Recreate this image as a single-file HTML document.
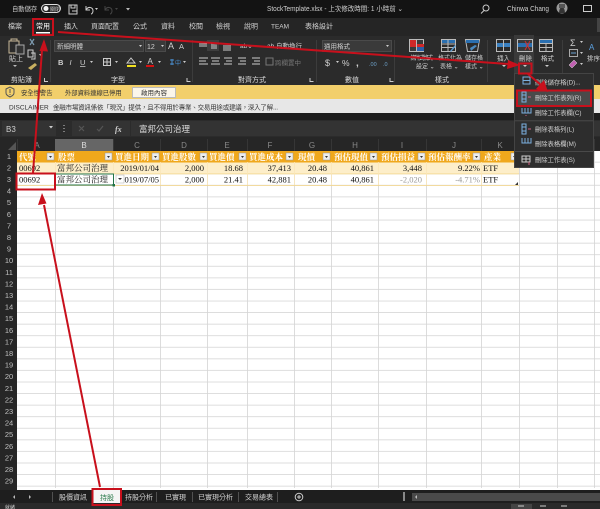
<!DOCTYPE html>
<html><head><meta charset="utf-8"><style>
html,body{margin:0;padding:0;background:#1a1a1a;width:600px;height:509px;overflow:hidden}
svg{display:block}
text{font-family:"Liberation Sans","Noto Sans CJK TC",sans-serif;font-size:7px;fill:#d0d0d0}
.s{font-family:"Liberation Serif","Noto Serif CJK SC",serif;font-size:8.5px;fill:#111}
.h{font-family:"Liberation Serif","Noto Serif CJK SC",serif;font-size:8.5px;fill:#fff;font-weight:bold}
.r{text-anchor:end}.m{text-anchor:middle}
.g{fill:#888;font-size:8px;text-anchor:middle}
.rn{fill:#c0c0c0;font-size:7.5px;text-anchor:middle}
.i{fill:none;stroke:#ccc;stroke-width:1}
.red{stroke:#c8101c;stroke-width:2;fill:none}
.hd{fill:#c8101c}
.sm{font-size:6px}
</style></head><body>
<svg width="600" height="509" viewBox="0 0 600 509" xmlns="http://www.w3.org/2000/svg">
<defs>
<pattern id="rows" x="0" y="151" width="600" height="11.57" patternUnits="userSpaceOnUse"><rect y="10.800" width="600" height="0.8" fill="#d4d4d4"/></pattern>
</defs>
<!-- title bar -->
<rect width="600" height="18" fill="#131313"/>
<text x="12" y="11" class="sm" style="font-size:6.300px">自動儲存</text>
<rect x="41.500" y="4.500" width="19" height="8" rx="4" fill="#222" stroke="#ddd"/><circle cx="46" cy="8.500" r="2.500" fill="#eee"/><text x="50" y="11" style="font-size:5px">關閉</text>
<path class="i" d="M69 5h8v9h-8zM71 5v3h4V5M72 11h5"/>
<path class="i" d="M86 6v4h4M86 10c2-4 7-3 7 1 0 1.500-1 3-2 3"/><path d="M95 8h3l-1.500 2z" fill="#ccc"/>
<path d="M105 6v4h4M105 10c2-4 7-3 7 1 0 1.500-1 3-2 3" fill="none" stroke="#444"/><path d="M115 8h3l-1.500 2z" fill="#444"/>
<path d="M126 8h4l-2 2.500z" fill="#bbb"/>
<text x="267" y="11" textLength="136" lengthAdjust="spacingAndGlyphs" style="font-size:7px">StockTemplate.xlsx  -  上次修改時間: 1 小時前  ⌄</text>
<circle cx="486" cy="8" r="3" class="i"/><path class="i" d="M484 10.500l-3 3"/>
<text x="507" y="11" textLength="42" lengthAdjust="spacingAndGlyphs" style="font-size:7px">Chinwa Chang</text>
<circle cx="562" cy="8" r="5.500" fill="#999"/><path d="M559 13a3 6 0 0 1 6 0z" fill="#333"/><rect x="559" y="4" width="6" height="4" fill="#555"/>
<rect x="583.500" y="5.500" width="8" height="6" class="i"/>
<!-- tabs -->
<rect y="18" width="600" height="18" fill="#252525"/>
<g><text x="8" y="28.500">檔案</text><text x="36" y="28.500" style="fill:#fff">常用</text><text x="64" y="28.500">插入</text><text x="91" y="28.500">頁面配置</text><text x="133" y="28.500">公式</text><text x="161" y="28.500">資料</text><text x="189" y="28.500">校閱</text><text x="216" y="28.500">檢視</text><text x="244" y="28.500">說明</text><text x="271" y="28.500" style="font-size:6.500px">TEAM</text><text x="305" y="28.500">表格設計</text></g>
<rect x="36" y="32" width="14" height="1.500" fill="#fff"/>
<!-- ribbon -->
<rect y="36" width="600" height="49" fill="#2b2b2b"/>
<rect x="597" y="18" width="3" height="14" fill="#444"/>
<g fill="#444"><rect x="50" y="40" width=".7" height="42"/><rect x="192" y="40" width=".7" height="42"/><rect x="316" y="40" width=".7" height="42"/><rect x="394" y="40" width=".7" height="42"/><rect x="487" y="40" width=".7" height="42"/><rect x="562" y="40" width=".7" height="42"/></g>
<!-- clipboard -->
<path d="M11 39h6v2h-6zM9 41h10v4h-3v8h-7z" fill="none" stroke="#c8b898"/><rect x="16" y="45" width="8" height="9" fill="#333" stroke="#aaa"/>
<text x="9" y="61" style="font-size:7px">貼上</text><path d="M13 65h4l-2 2z" fill="#bbb"/>
<path d="M30 39l4 6m0-6l-4 6" stroke="#7d9bb0" stroke-width="1.200"/>
<path class="i" d="M28 50h5v7h-5zM31 53h4v6h-4"/><path d="M39 54h3l-1.500 2z" fill="#ccc"/>
<path d="M28 68l7-5 2 2-6 5z" fill="#c8b060"/>
<text x="11" y="82" style="fill:#ddd">剪貼簿</text>
<path class="i" d="M44.500 78v3.500h3.500"/>
<!-- font -->
<rect x="54.500" y="40.500" width="89" height="11" fill="#3a3a3a" stroke="#4a4a4a"/><text x="57" y="48.500" style="font-size:6.500px">新細明體</text><path d="M139 45h3l-1.500 2z" fill="#ccc"/>
<rect x="145.500" y="40.500" width="20" height="11" fill="#3a3a3a" stroke="#4a4a4a"/><text x="147" y="49" style="font-size:7px">12</text><path d="M161 45h3l-1.500 2z" fill="#ccc"/>
<text x="168" y="49" style="font-size:9px">A</text><text x="179" y="49" style="font-size:7.500px">A</text>
<text x="58" y="65" style="font-size:7.500px;font-weight:bold">B</text><text x="69.500" y="65" style="font-size:7.500px;font-style:italic">I</text><text x="80" y="65" style="font-size:7.500px;text-decoration:underline">U</text><path d="M90 61h3l-1.500 2z" fill="#ccc"/>
<rect x="103.500" y="58.500" width="7" height="7" class="i"/><path class="i" d="M107 58.500v7M103.500 62h7"/><path d="M115 61h3l-1.500 2z" fill="#ccc"/>
<path d="M127 63l4-5 4 5z" fill="none" stroke="#ccc"/><rect x="127" y="65" width="9" height="2" fill="#f0e020"/><path d="M139 61h3l-1.500 2z" fill="#ccc"/>
<text x="147.500" y="64" style="font-size:8px">A</text><rect x="146" y="65" width="8" height="2" fill="#d81010"/><path d="M158 61h3l-1.500 2z" fill="#ccc"/>
<path d="M172 59v6M170 60h4M170 64h4" stroke="#4a8fd0"/><text x="175" y="65" style="font-size:6px;fill:#4a8fd0">中</text><path d="M183 61h3l-1.500 2z" fill="#ccc"/>
<text x="111" y="82" style="fill:#ddd">字型</text>
<path class="i" d="M187 78v3.500h3.500"/>
<!-- alignment -->
<rect x="207" y="40" width="12" height="11" fill="#3e3e3e"/>
<path class="i" d="M199 42h8M199 44h8M199 46h8M211 44h6M211 46h6M211 48h6M223 46h8M223 48h8M223 50h8"/>
<path class="i" d="M199 58h9M199 61h7M199 64h9M211 58h9M212 61h7M211 64h9M224 58h8M226 61h6M224 64h8M238 58h8M240 61h6M238 64h8M252 58h8M254 61h6M252 64h8"/>
<text x="240" y="48" style="font-size:6.500px">ab⌄</text>
<text x="267" y="48" style="font-size:6.500px">ab 自動換行</text>
<rect x="266" y="58" width="7" height="7" class="i" style="stroke:#777"/>
<text x="275" y="65" style="font-size:6.500px;fill:#777">跨欄置中</text>
<text x="238" y="82" style="fill:#ddd">對齊方式</text>
<path class="i" d="M310 78v3.500h3.500"/>
<!-- number -->
<rect x="322.500" y="40.500" width="69" height="11" fill="#3a3a3a" stroke="#4a4a4a"/><text x="324" y="48.500" style="font-size:6.500px">通用格式</text><path d="M386 45h3l-1.500 2z" fill="#ccc"/>
<text x="325" y="66" style="font-size:9px">$</text><path d="M336 61h3l-1.500 2z" fill="#ccc"/><text x="342" y="66" style="font-size:8.500px">%</text><text x="356" y="66" style="font-size:10px;font-weight:bold">,</text>
<text x="369" y="66" style="font-size:5.500px;fill:#6da0c8">.00</text><text x="383" y="66" style="font-size:5.500px;fill:#6da0c8">.0</text>
<text x="345" y="82" style="fill:#ddd">數值</text>
<path class="i" d="M390 78v3.500h3.500"/>
<!-- styles -->
<rect x="409.500" y="39.500" width="14" height="12" fill="#3a3a3a" stroke="#bbb"/><rect x="410" y="40" width="7" height="4" fill="#d02828"/><rect x="410" y="44" width="14" height="3" fill="#d02828"/><rect x="417" y="47" width="7" height="4" fill="#2a5fa8"/><path d="M416.500 40v11" stroke="#bbb"/>
<rect x="441.500" y="39.500" width="14" height="12" fill="none" stroke="#bbb"/><rect x="442" y="40" width="13" height="3" fill="#2a6fb0"/><path d="M448 40v11M442 44h13M442 47.500h13" stroke="#bbb"/><path d="M450 51l5-6 1 1-5 6z" fill="#5a9ad0"/>
<path d="M465.500 39.500h14l-2 12h-10z" fill="none" stroke="#bbb"/><rect x="466" y="40" width="13" height="3" fill="#2a6fb0"/><path d="M470 48l5-3 2 1-6 5z" fill="#4a8ac0"/>
<text x="410" y="60" class="sm" textLength="23">條件式格式</text>
<text x="416" y="68.500" class="sm">設定 ⌄</text>
<text x="438" y="60" class="sm">格式化為</text><text x="440" y="68.500" class="sm">表格 ⌄</text>
<text x="465" y="60" class="sm">儲存格</text><text x="465" y="68.500" class="sm">樣式 ⌄</text>
<text x="435" y="82" style="fill:#ddd">樣式</text>
<!-- cells -->
<rect x="514" y="35" width="20" height="38" fill="#3a3a3a"/>
<rect x="496.500" y="39.500" width="14" height="12" fill="none" stroke="#bbb"/><rect x="497" y="43" width="13" height="4" fill="#3a80c0"/><path d="M503.500 40v11" stroke="#bbb"/>
<rect x="517.500" y="39.500" width="15" height="12" fill="none" stroke="#bbb"/><rect x="518" y="43" width="14" height="4" fill="#2a6fb0"/><path d="M525 41l5 9m0-9l-5 9" stroke="#d03030"/>
<rect x="539.500" y="39.500" width="13" height="12" fill="none" stroke="#bbb"/><path d="M540 43.500h13M540 47.500h13M546 40v11" stroke="#bbb"/><rect x="540" y="40" width="12" height="3" fill="#2a6fb0"/>
<text x="497" y="60.500" class="sm" style="font-size:6.500px">插入</text><text x="519" y="60.500" class="sm" style="font-size:6.500px">刪除</text><text x="541" y="60.500" class="sm" style="font-size:6.500px">格式</text>
<path d="M502 65h4l-2 2z" fill="#ccc"/><path d="M523 65h4l-2 2z" fill="#ccc"/><path d="M545 65h4l-2 2z" fill="#ccc"/>
<text x="570" y="46" style="font-size:9px">Σ</text><path d="M580 41h3l-1.500 2z" fill="#ccc"/>
<rect x="569.500" y="49.500" width="8" height="7" fill="none" stroke="#aaa"/><path d="M571 53h5" stroke="#6aa0d0"/><path d="M580 52h3l-1.500 2z" fill="#ccc"/>
<path d="M569 65l5-5 3 3-5 5z" fill="#c060b0" stroke="#ddd" stroke-width=".5"/><path d="M580 63h3l-1.500 2z" fill="#ccc"/>
<text x="589" y="50" style="font-size:8px;fill:#5aa0e0">A</text><text x="587" y="60.500" style="font-size:6.500px">排序</text>
<!-- yellow bar -->
<rect y="85" width="600" height="14" fill="#f2cf6b"/>
<path d="M6 89l4-2 4 2v4c0 2-2 3-4 4-2-1-4-2-4-4z" fill="none" stroke="#555"/><rect x="9.500" y="89" width="1" height="4" fill="#555"/><rect x="9.500" y="94" width="1" height="1" fill="#555"/>
<text x="21" y="95" style="fill:#333;font-size:6.300px">安全性警告</text>
<text x="65" y="95" style="fill:#333;font-size:6.300px">外部資料連線已停用</text>
<rect x="132.500" y="87.500" width="43" height="10" fill="#fbf6ea" stroke="#bbb"/><text x="141" y="95" style="fill:#333;font-size:6.500px">啟用內容</text>
<!-- disclaimer -->
<rect y="99" width="600" height="14" fill="#e7e7e7"/>
<text x="9" y="109.500" style="fill:#333;font-size:6.500px">DISCLAIMER</text>
<text x="53" y="109.500" textLength="225" style="fill:#333;font-size:6.500px">金融市場資訊係依「現況」提供，且不得用於專業、交易用途或建議，深入了解...</text>
<!-- formula bar -->
<rect y="113" width="600" height="26" fill="#1d1d1d"/>
<rect y="120" width="600" height="17" fill="#2b2b2b"/>
<rect x="2" y="121" width="54" height="15" fill="#333"/>
<text x="6" y="132" style="font-size:8px">B3</text><path d="M49 126h4l-2 2.500z" fill="#ccc"/>
<path d="M64 125v1M64 128v1M64 131v1" stroke="#ccc"/>
<rect x="72" y="121" width="58" height="15" fill="#333"/>
<path d="M79 126l5 5m0-5l-5 5" stroke="#555" stroke-width="1.200"/>
<path d="M97 129l2 2 4-5" stroke="#555" stroke-width="1.200" fill="none"/>
<text x="115" y="132" style="font-size:8px;font-style:italic;font-family:'Liberation Serif',serif;font-weight:bold">fx</text>
<rect x="131" y="121" width="469" height="15" fill="#333"/>
<text x="139" y="132" style="font-size:8.500px;fill:#ddd">富邦公司治理</text>
<!-- column headers -->
<rect y="137" width="600" height="14" fill="#262626"/>
<rect x="55" y="139" width="58" height="12" fill="#666"/>
<path d="M8 150l8-8v8z" fill="#555"/>
<g fill="#3d3d3d"><rect x="17" y="139" width=".7" height="12"/><rect x="113" y="139" width=".7" height="12"/><rect x="160" y="139" width=".7" height="12"/><rect x="207" y="139" width=".7" height="12"/><rect x="247" y="139" width=".7" height="12"/><rect x="294" y="139" width=".7" height="12"/><rect x="331" y="139" width=".7" height="12"/><rect x="378" y="139" width=".7" height="12"/><rect x="426" y="139" width=".7" height="12"/><rect x="481" y="139" width=".7" height="12"/><rect x="519" y="139" width=".7" height="12"/><rect x="557" y="139" width=".7" height="12"/><rect x="594" y="139" width=".7" height="12"/></g>
<text class="g" x="37" y="148">A</text><text class="g" x="84" y="148" style="fill:#ddd">B</text><text class="g" x="137" y="148">C</text><text class="g" x="184" y="148">D</text><text class="g" x="227" y="148">E</text><text class="g" x="270" y="148">F</text><text class="g" x="312" y="148">G</text><text class="g" x="355" y="148">H</text><text class="g" x="402" y="148">I</text><text class="g" x="454" y="148">J</text><text class="g" x="500" y="148">K</text><text class="g" x="538" y="148">L</text><text class="g" x="576" y="148">M</text>
<!-- row header & grid -->
<rect y="151" width="17" height="339" fill="#262626"/>
<rect x="17" y="151" width="583" height="339" fill="#fff"/>
<rect x="17" y="151" width="583" height="339" fill="url(#rows)"/>
<g fill="#d4d4d4"><rect x="55" y="151" width=".8" height="337"/><rect x="113" y="151" width=".8" height="337"/><rect x="160" y="151" width=".8" height="337"/><rect x="207" y="151" width=".8" height="337"/><rect x="247" y="151" width=".8" height="337"/><rect x="294" y="151" width=".8" height="337"/><rect x="331" y="151" width=".8" height="337"/><rect x="378" y="151" width=".8" height="337"/><rect x="426" y="151" width=".8" height="337"/><rect x="481" y="151" width=".8" height="337"/><rect x="519" y="151" width=".8" height="337"/><rect x="557" y="151" width=".8" height="337"/><rect x="594" y="151" width=".8" height="337"/></g>
<g>
<text class="rn" x="9" y="159">1</text><text class="rn" x="9" y="170.500">2</text><text class="rn" x="9" y="182">3</text><text class="rn" x="9" y="193.500">4</text><text class="rn" x="9" y="205">5</text><text class="rn" x="9" y="217">6</text><text class="rn" x="9" y="228.500">7</text><text class="rn" x="9" y="240">8</text><text class="rn" x="9" y="251.500">9</text><text class="rn" x="9" y="263">10</text><text class="rn" x="9" y="275">11</text><text class="rn" x="9" y="286.500">12</text><text class="rn" x="9" y="298">13</text><text class="rn" x="9" y="309.500">14</text><text class="rn" x="9" y="321">15</text><text class="rn" x="9" y="333">16</text><text class="rn" x="9" y="344.500">17</text><text class="rn" x="9" y="356">18</text><text class="rn" x="9" y="367.500">19</text><text class="rn" x="9" y="379">20</text><text class="rn" x="9" y="391">21</text><text class="rn" x="9" y="402.500">22</text><text class="rn" x="9" y="414">23</text><text class="rn" x="9" y="425.500">24</text><text class="rn" x="9" y="437">25</text><text class="rn" x="9" y="449">26</text><text class="rn" x="9" y="460.500">27</text><text class="rn" x="9" y="472">28</text><text class="rn" x="9" y="483.500">29</text>
</g>
<!-- table -->
<rect x="17" y="151" width="502" height="11.500" fill="#f0a81c"/>
<rect x="17" y="162.500" width="502" height="11.500" fill="#fdeec9"/>
<rect x="17" y="185" width="502" height=".8" fill="#f4d58a"/>
<rect x="17" y="173.500" width="502" height=".8" fill="#f4d58a"/>
<g fill="#fbe6b8"><rect x="55" y="162" width=".8" height="23"/><rect x="113" y="162" width=".8" height="23"/><rect x="160" y="162" width=".8" height="23"/><rect x="207" y="162" width=".8" height="23"/><rect x="247" y="162" width=".8" height="23"/><rect x="294" y="162" width=".8" height="23"/><rect x="331" y="162" width=".8" height="23"/><rect x="378" y="162" width=".8" height="23"/><rect x="426" y="162" width=".8" height="23"/><rect x="481" y="162" width=".8" height="23"/></g>
<text class="h" x="19" y="160">代號</text><text class="h" x="58" y="160">股票</text><text class="h" x="115" y="160">買進日期</text><text class="h" x="162" y="160">買進股數</text><text class="h" x="209" y="160">買進價</text><text class="h" x="249" y="160">買進成本</text><text class="h" x="298" y="160">現價</text><text class="h" x="334" y="160">預估現值</text><text class="h" x="381" y="160">預估損益</text><text class="h" x="428" y="160">預估報酬率</text><text class="h" x="484" y="160">產業</text>
<g fill="#eee" stroke="#999" stroke-width=".5"><rect x="47" y="153" width="7" height="7"/><rect x="105" y="153" width="7" height="7"/><rect x="152" y="153" width="7" height="7"/><rect x="200" y="153" width="7" height="7"/><rect x="239" y="153" width="7" height="7"/><rect x="286" y="153" width="7" height="7"/><rect x="323" y="153" width="7" height="7"/><rect x="370" y="153" width="7" height="7"/><rect x="418" y="153" width="7" height="7"/><rect x="473" y="153" width="7" height="7"/><rect x="511" y="153" width="7" height="7"/></g>
<g fill="#333"><path d="M107 156h3l-1.500 2zM154 156h3l-1.500 2zM202 156h3l-1.500 2zM288 156h3l-1.500 2zM325 156h3l-1.500 2zM372 156h3l-1.500 2zM420 156h3l-1.500 2zM475 156h3l-1.500 2zM513 156h3l-1.500 2zM241 156h3l-1.500 2zM49 156h3l-1.500 2z"/></g>
<text class="s" x="19" y="171">00692</text><text class="s" x="57" y="171">富邦公司治理</text><text class="s r" x="159" y="171">2019/01/04</text><text class="s r" x="204" y="171">2,000</text><text class="s r" x="243" y="171">18.68</text><text class="s r" x="291" y="171">37,413</text><text class="s r" x="327" y="171">20.48</text><text class="s r" x="374" y="171">40,861</text><text class="s r" x="422" y="171">3,448</text><text class="s r" x="480" y="171">9.22%</text><text class="s" x="483" y="171">ETF</text>
<text class="s" x="19" y="182.500">00692</text><text class="s" x="57" y="182.500">富邦公司治理</text><text class="s r" x="159" y="182.500">2019/07/05</text><text class="s r" x="204" y="182.500">2,000</text><text class="s r" x="243" y="182.500">21.41</text><text class="s r" x="291" y="182.500">42,881</text><text class="s r" x="327" y="182.500">20.48</text><text class="s r" x="374" y="182.500">40,861</text><text class="s r" x="422" y="182.500" style="fill:#999">-2,020</text><text class="s r" x="480" y="182.500" style="fill:#999">-4.71%</text><text class="s" x="483" y="182.500">ETF</text>
<!-- selection -->
<rect x="55.500" y="174" width="58" height="11" fill="none" stroke="#217346" stroke-width="1"/>
<rect x="112.500" y="184" width="2.500" height="2.500" fill="#217346"/>
<rect x="116" y="175" width="8" height="8" fill="#fff" stroke="#aaa" stroke-width=".5"/><path d="M118 178h4l-2 2z" fill="#333"/>
<path d="M515 185l3-3v3z" fill="#333"/>
<!-- menu -->
<rect x="514.500" y="73.500" width="79" height="94" fill="#2d2d2d" stroke="#444"/>
<rect x="516" y="90" width="75" height="16" fill="#4a4a4a"/>
<rect x="515" y="120.500" width="78" height=".7" fill="#555"/>
<rect x="515" y="151" width="78" height=".7" fill="#555"/>
<g>
<text x="535" y="84.500" style="font-size:6.300px">刪除儲存格(D)...</text>
<text x="535" y="100" style="font-size:6.300px">刪除工作表列(R)</text>
<text x="535" y="115" style="font-size:6.300px">刪除工作表欄(C)</text>
<text x="535" y="131.500" style="font-size:6.300px">刪除表格列(L)</text>
<text x="535" y="146" style="font-size:6.300px">刪除表格欄(M)</text>
<text x="535" y="162" style="font-size:6.300px">刪除工作表(S)</text>
</g>
<g fill="none" stroke-width="1">
<path d="M523 77h7v7h-7zM523 80.500h7" stroke="#7ab0e0"/>
<path d="M522 92h4v10h-4zM522 95h4M522 99h4" stroke="#7ab0e0"/><path d="M528 97h3" stroke="#d06080"/>
<path d="M522 108v5h9v-5M525 108v5M528 108v5" stroke="#7ab0e0"/><path d="M526 116v-1" stroke="#d06080"/>
<path d="M522 124h4v10h-4zM522 127h4M522 131h4" stroke="#7ab0e0"/><path d="M528 129h3" stroke="#d06080"/>
<path d="M522 138v5h9v-5M525 138v5M528 138v5" stroke="#7ab0e0"/>
<path d="M522 156h8v6h-8zM526 156v6M522 159h8" stroke="#ccc"/><path d="M529 162v3" stroke="#d06080"/>
</g>
<!-- tabs bar -->
<rect y="490" width="600" height="13" fill="#1e1e1e"/>
<rect y="503" width="600" height="6" fill="#2a2a2a"/>
<path d="M15 495v4l-2-2zM29 495v4l2-2z" fill="#bbb"/>
<rect x="52" y="492" width=".7" height="10" fill="#666"/>
<rect x="93" y="490" width="27" height="13" fill="#f4f4f4"/>
<text x="59" y="499.500" style="font-size:7px">股價資訊</text>
<text x="100" y="500" style="font-size:7px;fill:#2a7a4a">持股</text>
<text x="125" y="499.500" style="font-size:7px">持股分析</text>
<rect x="156" y="492" width=".7" height="10" fill="#666"/>
<text x="165" y="499.500" style="font-size:7px">已實現</text>
<rect x="192" y="492" width=".7" height="10" fill="#666"/>
<text x="198" y="499.500" style="font-size:7px">已實現分析</text>
<rect x="238" y="492" width=".7" height="10" fill="#666"/>
<text x="245" y="499.500" style="font-size:7px">交易總表</text>
<rect x="277" y="492" width=".7" height="10" fill="#666"/>
<circle cx="299" cy="497" r="3.800" fill="none" stroke="#ccc"/><path d="M297 497h4M299 495v4" stroke="#ccc"/>
<rect x="403" y="492" width="2" height="9" fill="#888"/>
<rect x="412" y="493" width="188" height="8" fill="#4a4a4a"/>
<path d="M417 495v4l-2-2z" fill="#bbb"/>
<text x="5" y="509" style="font-size:5px">就緒</text>
<rect x="511" y="504" width="21" height="5" fill="#444"/>
<path class="i" d="M518 506h6M540 506h6M561 506h6"/>
<!-- red annotations -->
<rect x="33" y="19" width="20" height="16" class="red"/>
<rect x="519" y="63.500" width="12.500" height="10" class="red"/>
<rect x="517" y="90.500" width="74" height="15.500" class="red"/>
<rect x="16.500" y="173.500" width="38.500" height="16" class="red"/>
<rect x="92.500" y="489" width="28.500" height="16" class="red"/>
<path class="red" d="M33 173L42 50"/><path class="hd" d="M44 39l-4.500 12 8.500.5z"/>
<path class="red" d="M100 487L44 205"/><path class="hd" d="M42 193l-4 12 8.500-1.500z"/>
<path class="red" d="M58 32L508 64"/><path class="hd" d="M520 65l-12-5-1 9z"/>
<path class="red" d="M528 74L541 85"/><path class="hd" d="M548 92l-4-12-8 9z"/>
</svg>
</body></html>
